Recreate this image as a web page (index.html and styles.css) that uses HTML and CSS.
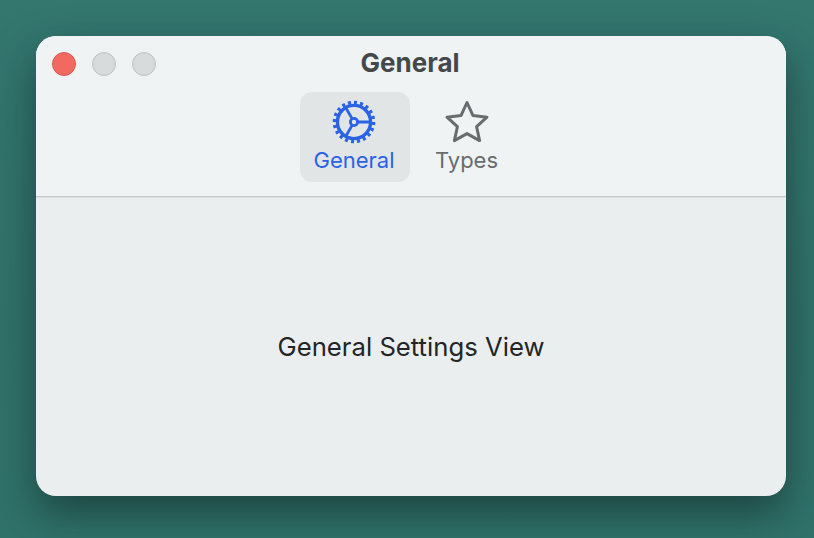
FILE: index.html
```html
<!DOCTYPE html>
<html lang="en">
<head>
<meta charset="utf-8">
<title>General</title>
<link rel="stylesheet" href="styles.css">
</head>
<body>
<main class="window">
  <header class="toolbar">
    <div class="titlebar">
      <div class="lights">
        <span class="light light-close"></span>
        <span class="light"></span>
        <span class="light"></span>
      </div>
      <h1 class="title">General</h1>
    </div>
    <nav class="tabs">
      <div class="tab tab-active">
        <svg class="tab-icon" viewBox="0 0 44 44" fill="none" stroke="currentColor">
          <circle cx="22" cy="22" r="16.6" stroke-width="3.4"/>
          <circle cx="22" cy="22" r="19.5" stroke-width="3.6" pathLength="20" stroke-dasharray="0.5 0.5"/>
          <circle cx="22" cy="22" r="3.6" stroke-width="2.8"/>
          <path d="M25.6 22H39M20.2 18.9L13.5 7.3M20.2 25.1L13.5 36.7" stroke-width="2.8"/>
        </svg>
        <span class="tab-label">General</span>
      </div>
      <div class="tab tab-plain">
        <svg class="tab-icon" viewBox="0 0 44 44" fill="none" stroke="currentColor" stroke-width="3" stroke-linejoin="round">
          <path d="M22 2.5L28 15.6L42 17.2L31.6 26.7L34.6 40.6L22 33.6L9.4 40.6L12.4 26.7L2 17.2L16 15.6Z"/>
        </svg>
        <span class="tab-label">Types</span>
      </div>
    </nav>
  </header>
  <section class="content">
    <p class="message">General Settings View</p>
  </section>
</main>
</body>
</html>
```
FILE: styles.css
```css
* {
  box-sizing: border-box;
}

html,
body {
  height: 100%;
  margin: 0;
}

body {
  padding: 36px 28px 42px 36px;
  overflow: hidden;
  background: linear-gradient(180deg, #33776f 0%, #30726a 60%, #30736b 100%);
  font-family: Inter, "Liberation Sans", sans-serif;
}

.window {
  display: flex;
  flex-direction: column;
  width: 750px;
  height: 460px;
  border-radius: 20px;
  overflow: hidden;
  background: #ebeeef;
  box-shadow: 0 18px 40px rgba(18, 42, 40, 0.62);
}

.toolbar {
  display: flex;
  flex-direction: column;
  align-items: center;
  height: 161px;
  background: #f0f3f4;
  border-bottom: 1px solid #c4c8ca;
  box-shadow: 0 1px 0 #dfe2e3;
}

.titlebar {
  display: flex;
  align-items: center;
  justify-content: center;
  width: 100%;
  height: 56px;
  position: relative;
}

.lights {
  position: absolute;
  top: 16px;
  left: 16px;
  display: flex;
  gap: 16px;
}

.light {
  width: 24px;
  height: 24px;
  border-radius: 50%;
  background: #d8dbdc;
  border: 1px solid #bdc1c2;
}

.light-close {
  background: #f2695f;
  border-color: #dc5a50;
}

.title {
  margin: 0 2px 3px 0;
  font-size: 26px;
  font-weight: 700;
  color: #454849;
}

.tabs {
  display: flex;
  margin-left: 3px;
}

.tab {
  display: flex;
  flex-direction: column;
  align-items: center;
  height: 90px;
  padding: 8px 2px 0 0;
  border-radius: 12px;
}

.tab-active {
  width: 110px;
  color: #2a63e6;
  background: #e2e5e6;
}

.tab-plain {
  width: 115px;
  color: #696c6e;
}

.tab-icon {
  display: block;
  width: 44px;
  height: 44px;
}

.tab-label {
  margin-top: 3px;
  font-size: 22px;
  line-height: 26px;
  font-weight: 400;
}

.content {
  flex: 1;
  display: flex;
  align-items: center;
  justify-content: center;
}

.message {
  margin: 0;
  font-size: 25.7px;
  color: #232526;
}
```
